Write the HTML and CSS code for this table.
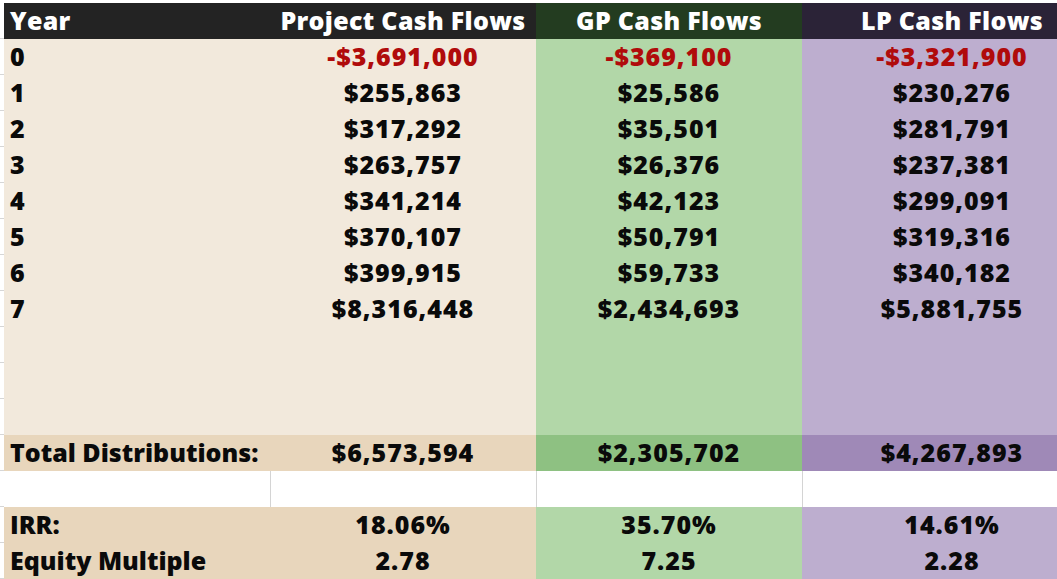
FILE: index.html
```html
<!DOCTYPE html>
<html>
<head>
<meta charset="utf-8">
<link rel="stylesheet" href="styles.css">
</head>
<body>
<div class="sheet">
  <div class="row head">
    <div class="cell left dark">Year</div>
    <div class="cell dark">Project Cash Flows</div>
    <div class="cell gp-dark">GP Cash Flows</div>
    <div class="cell lp-dark">LP Cash Flows</div>
  </div>
  <div class="row">
    <div class="cell left beige">0</div>
    <div class="cell num beige neg">-$3,691,000</div>
    <div class="cell num gp neg">-$369,100</div>
    <div class="cell num lp neg">-$3,321,900</div>
  </div>
  <div class="row">
    <div class="cell left beige">1</div>
    <div class="cell num beige">$255,863</div>
    <div class="cell num gp">$25,586</div>
    <div class="cell num lp">$230,276</div>
  </div>
  <div class="row">
    <div class="cell left beige">2</div>
    <div class="cell num beige">$317,292</div>
    <div class="cell num gp">$35,501</div>
    <div class="cell num lp">$281,791</div>
  </div>
  <div class="row">
    <div class="cell left beige">3</div>
    <div class="cell num beige">$263,757</div>
    <div class="cell num gp">$26,376</div>
    <div class="cell num lp">$237,381</div>
  </div>
  <div class="row">
    <div class="cell left beige">4</div>
    <div class="cell num beige">$341,214</div>
    <div class="cell num gp">$42,123</div>
    <div class="cell num lp">$299,091</div>
  </div>
  <div class="row">
    <div class="cell left beige">5</div>
    <div class="cell num beige">$370,107</div>
    <div class="cell num gp">$50,791</div>
    <div class="cell num lp">$319,316</div>
  </div>
  <div class="row">
    <div class="cell left beige">6</div>
    <div class="cell num beige">$399,915</div>
    <div class="cell num gp">$59,733</div>
    <div class="cell num lp">$340,182</div>
  </div>
  <div class="row">
    <div class="cell left beige">7</div>
    <div class="cell num beige">$8,316,448</div>
    <div class="cell num gp">$2,434,693</div>
    <div class="cell num lp">$5,881,755</div>
  </div>
  <div class="row spacer">
    <div class="cell beige"></div>
    <div class="cell beige"></div>
    <div class="cell gp"></div>
    <div class="cell lp"></div>
  </div>
  <div class="row">
    <div class="cell left label tan">Total Distributions:</div>
    <div class="cell num tan">$6,573,594</div>
    <div class="cell num gp-mid">$2,305,702</div>
    <div class="cell num lp-mid">$4,267,893</div>
  </div>
  <div class="row blank">
    <div class="cell white"></div>
    <div class="cell white grid"></div>
    <div class="cell white grid"></div>
    <div class="cell white grid"></div>
  </div>
  <div class="row">
    <div class="cell left label tan">IRR:</div>
    <div class="cell num tan">18.06%</div>
    <div class="cell num gp">35.70%</div>
    <div class="cell num lp">14.61%</div>
  </div>
  <div class="row">
    <div class="cell left label tan">Equity Multiple</div>
    <div class="cell num tan">2.78</div>
    <div class="cell num gp">7.25</div>
    <div class="cell num lp">2.28</div>
  </div>
</div>
</body>
</html>
```
FILE: styles.css
```css
html, body {
  margin: 0;
  padding: 0;
  width: 1057px;
  height: 579px;
  overflow: hidden;
  background-color: #ffffff;
  background-image: repeating-linear-gradient(to bottom, transparent 0, transparent 35px, #d6d6d6 35px, #d6d6d6 36px);
  background-position: 0 3px;
}

.sheet {
  margin: 3px 0 0 4px;
  width: 1098px;
  font-family: "Open Sans", "Noto Sans", sans-serif;
  font-weight: 800;
  font-size: 25px;
  letter-spacing: 0.3px;
  color: #0a0a0a;
}

.row {
  display: grid;
  grid-template-columns: 266px 266px 266px 300px;
  height: 36px;
}

.row.spacer {
  height: 108px;
}

.cell {
  display: flex;
  align-items: center;
  justify-content: center;
  white-space: nowrap;
  line-height: 34px;
  padding-bottom: 2px;
}

.cell.num {
  letter-spacing: 1px;
}

.cell.label {
  letter-spacing: 0;
}

.cell.left {
  justify-content: flex-start;
  padding-left: 6px;
}

.head .cell {
  color: #ffffff;
}

.dark { background: #232323; }
.gp-dark { background: #233c20; }
.lp-dark { background: #2b2337; }

.beige { background: #f2e9dc; }
.gp { background: #b2d7a8; }
.lp { background: #bdaecf; }

.tan { background: #e8d6bc; }
.gp-mid { background: #8ec182; }
.lp-mid { background: #9f89b7; }

.white { background: #ffffff; }
.grid { border-left: 1px solid #d4d4d4; }

.neg { color: #b00b0b; }
```
